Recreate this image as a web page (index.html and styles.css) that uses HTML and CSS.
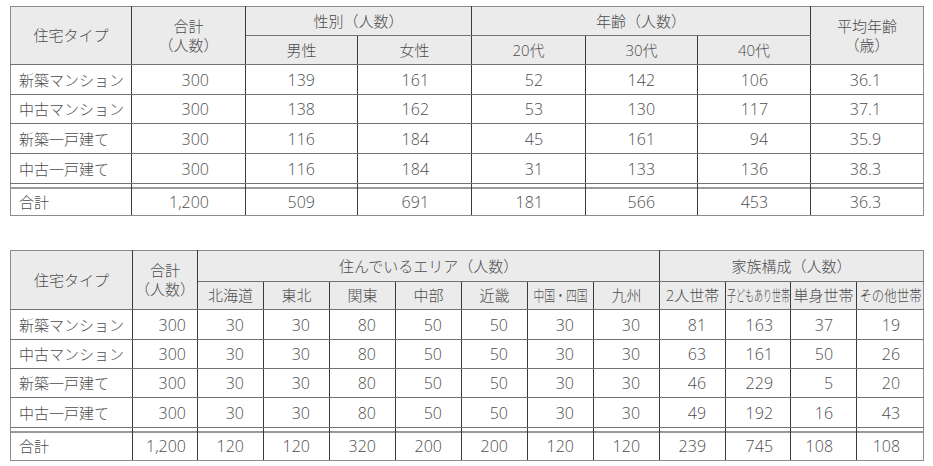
FILE: index.html
```html
<!DOCTYPE html>
<html lang="ja">
<head>
<meta charset="utf-8">
<link rel="stylesheet" href="styles.css">
</head>
<body>
<table class="tbl t1">
  <colgroup>
    <col class="w121"><col class="w114"><col class="w112"><col class="w114"><col class="w114"><col class="w112"><col class="w113"><col class="w113">
  </colgroup>
  <thead>
    <tr class="r29">
      <th rowspan="2" class="hd l tp">住宅タイプ</th>
      <th rowspan="2" class="hd tp two">合計<br>（人数）</th>
      <th colspan="2" class="hd tp">性別（人数）</th>
      <th colspan="3" class="hd tp">年齢（人数）</th>
      <th rowspan="2" class="hd tp r two">平均年齢<br>（歳）</th>
    </tr>
    <tr class="r29">
      <th class="hd">男性</th>
      <th class="hd">女性</th>
      <th class="hd">20代</th>
      <th class="hd">30代</th>
      <th class="hd">40代</th>
    </tr>
  </thead>
  <tbody>
    <tr class="r30"><td class="name l">新築マンション</td><td class="p36">300</td><td>139</td><td>161</td><td>52</td><td>142</td><td>106</td><td class="r">36.1</td></tr>
    <tr class="r29"><td class="name l">中古マンション</td><td class="p36">300</td><td>138</td><td>162</td><td>53</td><td>130</td><td>117</td><td class="r">37.1</td></tr>
    <tr class="r30"><td class="name l">新築一戸建て</td><td class="p36">300</td><td>116</td><td>184</td><td>45</td><td>161</td><td>94</td><td class="r">35.9</td></tr>
    <tr class="r30"><td class="name l">中古一戸建て</td><td class="p36">300</td><td>116</td><td>184</td><td>31</td><td>133</td><td>136</td><td class="r">38.3</td></tr>
    <tr class="r32 total"><td class="name l">合計</td><td class="p36">1,200</td><td>509</td><td>691</td><td>181</td><td>566</td><td>453</td><td class="r">36.3</td></tr>
  </tbody>
</table>

<table class="tbl t2">
  <colgroup>
    <col class="w122"><col class="w65"><col class="w66"><col class="w66"><col class="w66"><col class="w66"><col class="w66"><col class="w66"><col class="w66"><col class="w66"><col class="w65"><col class="w66"><col class="w67">
  </colgroup>
  <thead>
    <tr class="r31">
      <th rowspan="2" class="hd l tp">住宅タイプ</th>
      <th rowspan="2" class="hd tp two">合計<br>（人数）</th>
      <th colspan="7" class="hd tp">住んでいるエリア（人数）</th>
      <th colspan="4" class="hd tp r">家族構成（人数）</th>
    </tr>
    <tr class="r28">
      <th class="hd">北海道</th>
      <th class="hd">東北</th>
      <th class="hd">関東</th>
      <th class="hd">中部</th>
      <th class="hd">近畿</th>
      <th class="hd"><span class="sq sq72">中国・四国</span></th>
      <th class="hd">九州</th>
      <th class="hd">2人世帯</th>
      <th class="hd"><span class="sq sq60">子どもあり世帯</span></th>
      <th class="hd">単身世帯</th>
      <th class="hd r"><span class="sq sq83">その他世帯</span></th>
    </tr>
  </thead>
  <tbody>
    <tr class="r30"><td class="name l">新築マンション</td><td class="p11">300</td><td>30</td><td>30</td><td>80</td><td>50</td><td>50</td><td>30</td><td>30</td><td>81</td><td class="p17">163</td><td class="p23">37</td><td class="p23 r">19</td></tr>
    <tr class="r29"><td class="name l">中古マンション</td><td class="p11">300</td><td>30</td><td>30</td><td>80</td><td>50</td><td>50</td><td>30</td><td>30</td><td>63</td><td class="p17">161</td><td class="p23">50</td><td class="p23 r">26</td></tr>
    <tr class="r29"><td class="name l">新築一戸建て</td><td class="p11">300</td><td>30</td><td>30</td><td>80</td><td>50</td><td>50</td><td>30</td><td>30</td><td>46</td><td class="p17">229</td><td class="p23">5</td><td class="p23 r">20</td></tr>
    <tr class="r30"><td class="name l">中古一戸建て</td><td class="p11">300</td><td>30</td><td>30</td><td>80</td><td>50</td><td>50</td><td>30</td><td>30</td><td>49</td><td class="p17">192</td><td class="p23">16</td><td class="p23 r">43</td></tr>
    <tr class="r33 total"><td class="name l">合計</td><td class="p11">1,200</td><td>120</td><td>120</td><td>320</td><td>200</td><td>200</td><td>120</td><td>120</td><td>239</td><td class="p17">745</td><td class="p23">108</td><td class="p23 r">108</td></tr>
  </tbody>
</table>
</body>
</html>
```

FILE: styles.css
```css
html, body {
  margin: 0;
  background: #ffffff;
}
body {
  padding: 6px 0 0 10px;
  font-family: "Open Sans", "Noto Sans CJK JP", sans-serif;
  font-weight: 300;
  font-size: 15px;
  color: #4d4d4d;
}
.tbl {
  border-collapse: collapse;
  table-layout: fixed;
  width: 914px;
}
.t2 {
  margin-top: 34px;
}
.w121 { width: 121px; }
.w122 { width: 122px; }
.w112 { width: 112px; }
.w113 { width: 113px; }
.w114 { width: 114px; }
.w65 { width: 65px; }
.w66 { width: 66px; }
.w67 { width: 67px; }

.r28 { height: 28px; }
.r29 { height: 29px; }
.r30 { height: 30px; }
.r31 { height: 31px; }
.r32 { height: 32px; }
.r33 { height: 33px; }

.tbl th, .tbl td {
  border-top: 1px solid #737373;
  border-bottom: 1px solid #737373;
  border-left: 1px solid #3a3a3a;
  border-right: 1px solid #3a3a3a;
  padding: 0;
  line-height: 19px;
  white-space: nowrap;
}
.tbl th {
  font-weight: 300;
  background: #ebebeb;
  text-align: center;
  vertical-align: middle;
}
.tbl td {
  font-size: 16px;
  text-align: right;
  vertical-align: middle;
  padding-right: 42px;
  padding-top: 1px;
}
.t2 td {
  padding-right: 19px;
}
.tbl td.name {
  font-size: 15px;
  text-align: left;
  padding-left: 8px;
  padding-right: 0;
}
.tbl td.p36 { padding-right: 36px; }
.tbl td.p11 { padding-right: 11px; }
.tbl td.p17 { padding-right: 17px; }
.tbl td.p23 { padding-right: 23px; }

.tbl .l { border-left-color: #8c8c8c; }
.tbl .r { border-right-color: #8c8c8c; }
.tbl .tp { border-top-color: #8c8c8c; }
.tbl .total td {
  border-top-color: #404040;
  border-bottom-color: #8c8c8c;
  padding-top: 5px;
  box-shadow: inset 0 3px 0 #ffffff, inset 0 5px 0 #9a9a9a;
}
.two {
  padding-bottom: 2px;
}
.sq {
  display: inline-block;
}
.sq60 { transform: scaleX(0.6); margin: 0 -21px; }
.sq72 { transform: scaleX(0.72); margin: 0 -11px; }
.sq83 { transform: scaleX(0.83); margin: 0 -7px; }
```
